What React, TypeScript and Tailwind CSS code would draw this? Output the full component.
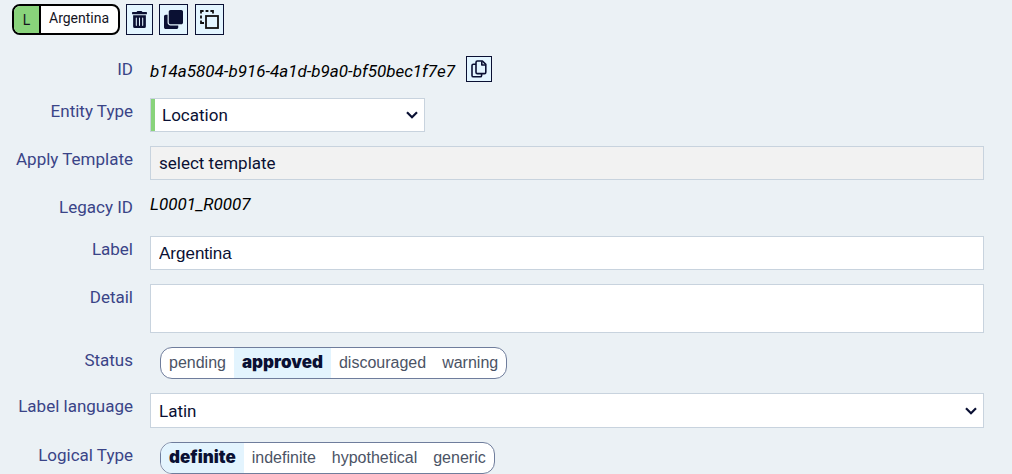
import React, { useState } from "react";
import { FaClone, FaTrashAlt } from "react-icons/fa";

type FieldProps = {
  label: string;
  htmlFor?: string;
  children: React.ReactNode;
};

type ToggleGroupProps = {
  label: string;
  options: string[];
  value: string;
  onChange: (value: string) => void;
};

function Field({ label, htmlFor, children }: FieldProps) {
  return (
    <>
      {htmlFor ? (
        <label htmlFor={htmlFor} className="text-right leading-[26px] text-[#3a4487]">
          {label}
        </label>
      ) : (
        <span className="text-right leading-[26px] text-[#3a4487]">{label}</span>
      )}
      <div className="min-w-0">{children}</div>
    </>
  );
}

function Chevron() {
  return (
    <svg
      viewBox="0 0 12 8"
      className="pointer-events-none absolute top-1/2 right-[7px] h-2 w-3 -translate-y-1/2"
      fill="none"
      stroke="#0a1033"
      strokeWidth="2.2"
    >
      <path d="M1 1.2l5 5 5-5" />
    </svg>
  );
}

function ToggleGroup({ label, options, value, onChange }: ToggleGroupProps) {
  return (
    <div
      role="group"
      aria-label={label}
      className="ml-2.5 inline-flex h-8 overflow-hidden rounded-xl border border-[#6f7d9c] bg-white align-top font-['Liberation_Sans',Arial,sans-serif] text-base"
    >
      {options.map((option) => (
        <button
          key={option}
          type="button"
          aria-pressed={option === value}
          onClick={() => onChange(option)}
          className={
            option === value
              ? "bg-[#e3f4fe] px-2 font-['Inter',sans-serif] text-[17px] font-black text-[#0a1033]"
              : "px-2 text-[#4b5365]"
          }
        >
          {option}
        </button>
      ))}
    </div>
  );
}

const iconButton =
  "flex items-center justify-center border border-[#0a1033] bg-[#e3f5ff] text-[#0a1033]";

const control = "block w-full appearance-none rounded-none border border-[#c8d3de] px-2 pt-0.5";

export default function App() {
  const [entityType, setEntityType] = useState("Location");
  const [label, setLabel] = useState("Argentina");
  const [detail, setDetail] = useState("");
  const [status, setStatus] = useState("approved");
  const [language, setLanguage] = useState("Latin");
  const [logicalType, setLogicalType] = useState("definite");

  return (
    <div className="bg-[#ebf1f5] font-['Roboto',sans-serif] text-[17px] text-[#0a1033]">
      <header className="flex items-center gap-1.5 px-3 pt-1 pb-[21px]">
        <div className="flex h-[31px] overflow-hidden rounded-lg border-2 border-black bg-white text-sm text-[#15151f]">
          <span className="flex w-[27px] items-center justify-center border-r-2 border-black bg-[#89d37b]">
            L
          </span>
          <span className="pr-[9px] pl-2 leading-6">Argentina</span>
        </div>
        <button type="button" aria-label="Delete" className={`${iconButton} h-[31px] w-[27px]`}>
          <FaTrashAlt size={17} />
        </button>
        <button type="button" aria-label="Duplicate" className={`${iconButton} h-[31px] w-[29px]`}>
          <FaClone size={19} />
        </button>
        <button type="button" aria-label="Use as template" className={`${iconButton} ml-px h-[31px] w-[29px]`}>
          <svg viewBox="0 0 19 19" className="size-[19px]" fill="none" stroke="#111" strokeWidth="1.8">
            <rect x="6" y="6" width="12" height="12" />
            <path d="M1 3.6V1h2.6M5.6 1h2.8M10.4 1H13v2.6M1 5.6v2.8M1 10.4V13h3" />
          </svg>
        </button>
      </header>

      <form className="grid grid-cols-[121px_minmax(0,1fr)] gap-x-[17px] gap-y-3.5 pr-7 pl-3">
        <Field label="ID">
          <div className="flex h-7 items-start gap-[11px]">
            <span className="leading-[30px] text-black italic">
              b14a5804-b916-4a1d-b9a0-bf50bec1f7e7
            </span>
            <button type="button" aria-label="Copy ID" className={`${iconButton} size-[26px]`}>
              <svg
                viewBox="0 0 16 18"
                className="h-[18px] w-4"
                fill="none"
                stroke="currentColor"
                strokeWidth="1.6"
                strokeLinejoin="round"
              >
                <path d="M6.4 1h5l3.400 3.400v7.800q0 1.400-1.400 1.400H6.400Q5 13.600 5 12.200V2.400Q5 1 6.400 1z" />
                <path d="M10.800 1.200v3.800h3.800" />
                <path d="M5 4.200H2.400Q1 4.200 1 5.600v9.800q0 1.400 1.400 1.400h6.800q1.400 0 1.400-1.400v-1.600" />
              </svg>
            </button>
          </div>
        </Field>

        <Field label="Entity Type" htmlFor="entity-type">
          <div className="relative w-[275px]">
            <select
              id="entity-type"
              value={entityType}
              onChange={(e) => setEntityType(e.target.value)}
              className="block h-[34px] w-full appearance-none border border-[#c8d3de] bg-white pt-0.5 pl-[11px] shadow-[inset_4px_0_0_#89d37b]"
            >
              <option>Location</option>
            </select>
            <Chevron />
          </div>
        </Field>

        <Field label="Apply Template" htmlFor="template">
          <select id="template" className={`${control} h-[34px] bg-[#f2f2f2]`}>
            <option>select template</option>
          </select>
        </Field>

        <Field label="Legacy ID">
          <div className="h-7 leading-5 text-black italic">L0001_R0007</div>
        </Field>

        <Field label="Label" htmlFor="label">
          <input
            id="label"
            value={label}
            onChange={(e) => setLabel(e.target.value)}
            className={`${control} h-[34px] bg-white font-['Liberation_Sans',Arial,sans-serif]`}
          />
        </Field>

        <Field label="Detail" htmlFor="detail">
          <textarea
            id="detail"
            value={detail}
            onChange={(e) => setDetail(e.target.value)}
            className={`${control} h-[49px] resize-none bg-white`}
          />
        </Field>

        <Field label="Status">
          <ToggleGroup
            label="Status"
            options={["pending", "approved", "discouraged", "warning"]}
            value={status}
            onChange={setStatus}
          />
        </Field>

        <Field label="Label language" htmlFor="language">
          <div className="relative">
            <select
              id="language"
              value={language}
              onChange={(e) => setLanguage(e.target.value)}
              className={`${control} h-[35px] bg-white`}
            >
              <option>Latin</option>
            </select>
            <Chevron />
          </div>
        </Field>

        <Field label="Logical Type">
          <ToggleGroup
            label="Logical Type"
            options={["definite", "indefinite", "hypothetical", "generic"]}
            value={logicalType}
            onChange={setLogicalType}
          />
        </Field>
      </form>
    </div>
  );
}
